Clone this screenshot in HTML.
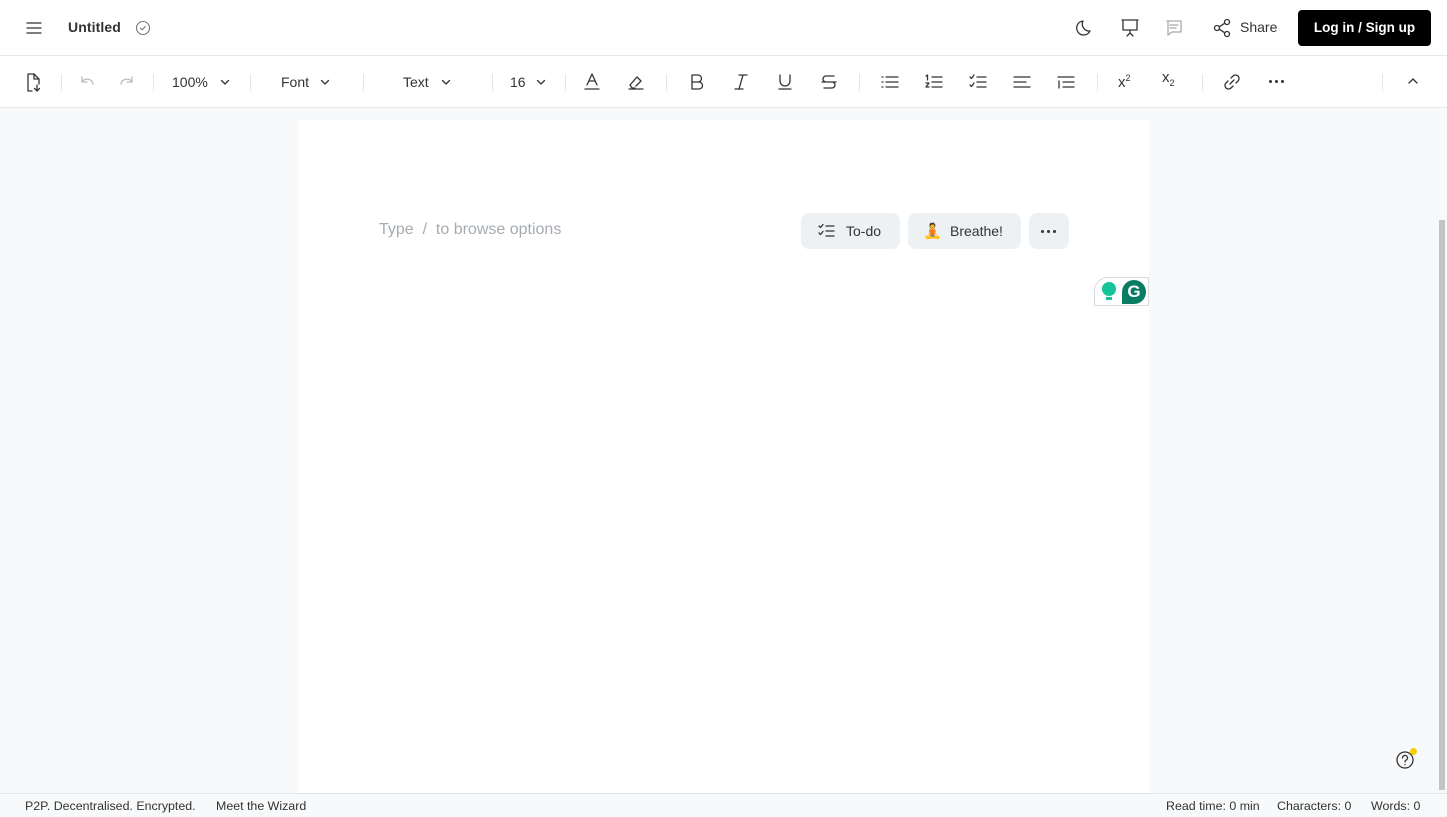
<!DOCTYPE html>
<html><head><meta charset="utf-8"><style>
*{box-sizing:border-box;margin:0;padding:0}
body{width:1447px;height:817px;overflow:hidden;font-family:"Liberation Sans",sans-serif;background:#f8f9fa;position:relative;color:#1f2328}
.top{position:absolute;left:0;top:0;width:1447px;height:56px;background:#fff;border-bottom:1px solid #e6e8ea}
.tb{position:absolute;left:0;top:56px;width:1447px;height:52px;background:#fff;border-bottom:1px solid #e6e8ea}
.abs{position:absolute}
svg{position:absolute;fill:none;stroke:#333;stroke-width:1.3;stroke-linecap:round;stroke-linejoin:round}
.sep{position:absolute;top:18px;width:1px;height:17px;background:#e3e5e7}
.lbl{position:absolute;top:18px;font-size:14px;color:#333}
.chev{position:absolute;top:21px}
.page{position:absolute;left:299px;top:120px;width:850px;height:673px;background:#fff}
.btn{position:absolute;top:213px;height:36px;background:#eef1f3;border-radius:8px;font-size:14px;color:#333}
.foot{position:absolute;left:0;top:793px;width:1447px;height:24px;background:#f8f9fa;border-top:1px solid #e3e5e7;font-size:12.4px;color:#333}
.dots{position:absolute;width:3px;height:3px;border-radius:2px;background:#333;box-shadow:6px 0 #333,12px 0 #333}
</style></head><body>
<div class="top">
<svg style="left:25px;top:20px" width="18" height="16"><path d="M2 3h14M2 8h14M2 13h14"/></svg>
<div class="abs" style="left:68px;top:19px;font-size:14px;font-weight:bold;color:#333;letter-spacing:0.1px">Untitled</div>
<svg style="left:135px;top:20px;stroke:#777;stroke-width:1.1" width="16" height="16"><circle cx="8" cy="8" r="6.5"/><path d="M5.5 8.2l1.8 1.6 3-3.4"/></svg>
<svg style="left:1075px;top:18px" width="20" height="20"><path d="M15 13A7 7 0 0 1 8 3 7 7 0 1 0 15 13z"/></svg>
<svg style="left:1120px;top:18px" width="20" height="20"><path d="M2 2h16M3 2v10h14V2M10 12v3M7 18l3-3 3 3"/></svg>
<svg style="left:1164px;top:18px;stroke:#aaa" width="20" height="20"><path d="M3 3h14v11H8l-4 3V3zM6 7h8M6 10h6"/></svg>
<svg style="left:1212px;top:18px" width="20" height="20"><circle cx="5" cy="10" r="2.5"/><circle cx="15" cy="4" r="2.5"/><circle cx="15" cy="16" r="2.5"/><path d="M7.2 8.8l5.6-3.6M7.2 11.2l5.6 3.6"/></svg>
<div class="abs" style="left:1240px;top:19px;font-size:14px;color:#333">Share</div>
<div class="abs" style="left:1298px;top:10px;width:133px;height:36px;background:#000;border-radius:4px;color:#fff;font-size:13.5px;font-weight:bold;text-align:center;line-height:36px">Log in / Sign up</div>
</div>
<div class="tb">
<svg style="left:24px;top:16px" width="20" height="22"><path d="M10 2H4v17h4M10 2l5 5v5M10 2v5h5M13 13v6M10.5 16.5L13 19l2.5-2.5"/></svg>
<div class="sep" style="left:61px"></div>
<svg style="left:78px;top:17px;stroke:#bbb" width="18" height="16"><path d="M4 4v5h5M4 9a6 6 0 0 1 11 2"/></svg>
<svg style="left:118px;top:17px;stroke:#bbb" width="18" height="16"><path d="M14 4v5H9M14 9a6 6 0 0 0-11 2"/></svg>
<div class="sep" style="left:153px"></div>
<div class="lbl" style="left:172px">100%</div>
<svg class="chev" style="left:219px" width="12" height="10"><path d="M2.5 3.5l3.5 3.5 3.5-3.5"/></svg>
<div class="sep" style="left:250px"></div>
<div class="lbl" style="left:281px">Font</div>
<svg class="chev" style="left:319px" width="12" height="10"><path d="M2.5 3.5l3.5 3.5 3.5-3.5"/></svg>
<div class="sep" style="left:363px"></div>
<div class="lbl" style="left:403px">Text</div>
<svg class="chev" style="left:440px" width="12" height="10"><path d="M2.5 3.5l3.5 3.5 3.5-3.5"/></svg>
<div class="sep" style="left:492px"></div>
<div class="lbl" style="left:510px">16</div>
<svg class="chev" style="left:535px" width="12" height="10"><path d="M2.5 3.5l3.5 3.5 3.5-3.5"/></svg>
<div class="sep" style="left:565px"></div>
<svg style="left:583px;top:16px" width="18" height="20"><path d="M4 13l5-11 5 11M6 9h6M2 17h14"/></svg>
<svg style="left:626px;top:16px" width="20" height="20"><path d="M3 17h14M4 13l7-8 4 4-5 5M4 13l2 3h3"/></svg>
<div class="sep" style="left:666px"></div>
<svg style="left:688px;top:17px" width="18" height="18"><path d="M4 2h6a3.5 3.5 0 0 1 0 7H4zM4 9h7a3.5 3.5 0 0 1 0 7H4z"/></svg>
<svg style="left:732px;top:17px" width="18" height="18"><path d="M7 2h8M3 16h8M11 2L7 16"/></svg>
<svg style="left:776px;top:17px" width="18" height="18"><path d="M4 2v6a5 5 0 0 0 10 0V2M3 16h12"/></svg>
<svg style="left:820px;top:17px" width="18" height="18"><path d="M14 3H6a3 3 0 0 0 0 6h6a3 3 0 0 1 0 6H4M2 9h14"/></svg>
<div class="sep" style="left:859px"></div>
<svg style="left:880px;top:17px" width="20" height="18"><path d="M2 4h1M2 9h1M2 14h1M6 4h12M6 9h12M6 14h12"/></svg>
<svg style="left:924px;top:17px" width="20" height="18"><path d="M2 3l1.5-1v5M2 10h3l-3 4h3M8 4h10M8 9h10M8 14h10"/></svg>
<svg style="left:968px;top:17px" width="20" height="18"><path d="M2 4l1.5 1.5L6 2M2 12l1.5 1.5L6 10M9 4h9M9 9h9M9 14h9"/></svg>
<svg style="left:1012px;top:17px" width="20" height="18"><path d="M2 4h16M2 9h12M2 14h16"/></svg>
<svg style="left:1056px;top:17px" width="20" height="18"><path d="M2 4h16M7 9h11M7 14h11M3 8v7"/></svg>
<div class="sep" style="left:1097px"></div>
<div class="lbl" style="left:1118px;top:17px;font-size:15px">x<sup style="font-size:9px">2</sup></div>
<div class="lbl" style="left:1162px;top:13px;font-size:15px">x<sub style="font-size:9px">2</sub></div>
<div class="sep" style="left:1202px"></div>
<svg style="left:1222px;top:16px" width="20" height="20"><path d="M8 12l4-4M9 6l2-2a3 3 0 0 1 5 5l-2 2M11 14l-2 2a3 3 0 0 1-5-5l2-2"/></svg>
<div class="dots" style="left:1269px;top:24px"></div>
<div class="sep" style="left:1382px"></div>
<svg style="left:1406px;top:20px" width="14" height="10"><path d="M3 7l4-4 4 4"/></svg>
</div>
<div class="page"></div>
<div class="abs" style="left:379px;top:221px;font-size:16px;color:#a6abb0">Type&nbsp;&nbsp;/&nbsp;&nbsp;to browse options</div>
<div class="btn" style="left:801px;width:99px">
<svg style="left:17px;top:10px;stroke-width:1.3" width="18" height="16"><path d="M1 3l1.5 1.5L5 1.5M1 10l1.5 1.5L5 8.5M8 3h8M8 8h8M8 13h8"/></svg>
<span class="abs" style="left:45px;top:10px">To-do</span></div>
<div class="btn" style="left:908px;width:113px"><span class="abs" style="left:15px;top:9px;font-size:15px">🧘</span><span class="abs" style="left:42px;top:10px">Breathe!</span></div>
<div class="btn" style="left:1029px;width:40px"><div class="dots" style="left:12px;top:17px"></div></div>
<div class="abs" style="left:1094px;top:277px;width:55px;height:29px;background:#fff;border:1px solid #d6dbe0;border-radius:14px 0 0 0"></div>
<div class="abs" style="left:1102px;top:282px;width:14px;height:14px;border-radius:7px;background:#15c39a"></div>
<div class="abs" style="left:1106px;top:297px;width:6px;height:3px;background:#15c39a"></div>
<div class="abs" style="left:1122px;top:280px;width:24px;height:24px;border-radius:12px 12px 12px 0;background:#0a7c64;color:#fff;font-weight:bold;font-size:17px;text-align:center;line-height:24px">G</div>
<svg style="left:1395px;top:750px;stroke-width:1.3" width="20" height="20"><circle cx="10" cy="10" r="8"/><path d="M7.5 8a2.5 2.5 0 1 1 3.5 2.2c-.8.4-1 .9-1 1.8M10 14.5v.2"/></svg>
<div class="abs" style="left:1410px;top:748px;width:7px;height:7px;border-radius:4px;background:#f5d000"></div>
<div class="abs" style="left:1439px;top:220px;width:6px;height:570px;background:#c4c4c4"></div>
<div class="foot">
<span class="abs" style="left:25px;top:5px">P2P. Decentralised. Encrypted.</span>
<span class="abs" style="left:216px;top:5px">Meet the Wizard</span>
<span class="abs" style="left:1166px;top:5px">Read time: 0 min</span>
<span class="abs" style="left:1277px;top:5px">Characters: 0</span>
<span class="abs" style="left:1371px;top:5px">Words: 0</span>
</div>
</body></html>
